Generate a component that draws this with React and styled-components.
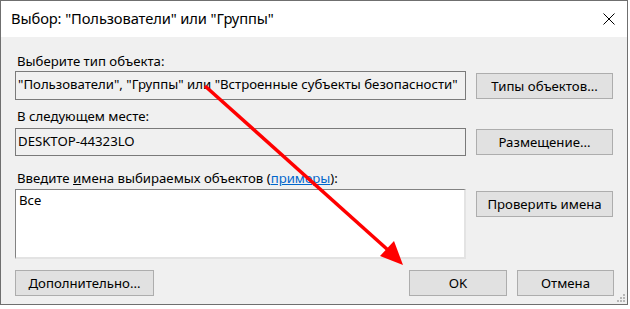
import styled, { createGlobalStyle } from 'styled-components';

const Global = createGlobalStyle`
  html, body {
    margin: 0;
    padding: 0;
    background: #ffffff;
  }
  body {
    font-family: "Noto Sans", "Liberation Sans", sans-serif;
    color: #000;
  }
`;

const Page = styled.div`
  position: relative;
  width: 630px;
  height: 309px;
  overflow: hidden;
`;

const Window = styled.div`
  width: 626px;
  height: 303px;
  border: 1px solid #6f6f6f;
  background: #f0f0f0;
  display: flex;
  flex-direction: column;
`;

const TitleBar = styled.div`
  height: 36px;
  background: #fff;
  display: flex;
  align-items: center;
  justify-content: space-between;
  padding: 0 10px 0 10px;
`;

const Title = styled.div`
  font-size: 14.7px;
  letter-spacing: -0.1px;
  margin-top: -2px;
`;

const Close = styled.button`
  width: 16px;
  height: 16px;
  border: 0;
  padding: 0;
  background: transparent;
  display: flex;
  align-items: center;
  justify-content: center;
  margin-top: -1px;
`;

const Body = styled.div`
  flex: 1;
  position: relative;
  padding: 16px 13px 6px 14px;
  display: flex;
  flex-direction: column;
`;

const Label = styled.div`
  height: 16px;
  line-height: 16px;
  font-size: 13.2px;
  margin-top: ${({ $mt }) => $mt || 0}px;
  margin-bottom: ${({ $mb }) => $mb || 3}px;
  padding-left: 2px;
  white-space: nowrap;

  u {
    text-decoration: underline;
  }
  a {
    color: #0066cc;
    text-decoration: underline;
  }
`;

const Row = styled.div`
  display: flex;
  gap: 10px;
  align-items: ${({ $top }) => ($top ? 'flex-start' : 'center')};
`;

const Field = styled.div`
  width: 451px;
  height: ${({ $h }) => $h}px;
  box-sizing: border-box;
  border: 1px solid #7a7a7a;
  background: #f0f0f0;
  font-size: 13.2px;
  padding: 4px 2px;
  white-space: nowrap;
  overflow: hidden;
  line-height: 17px;
`;

const TextArea = styled.div`
  width: 451px;
  height: 70px;
  box-sizing: border-box;
  background: #fff;
  border-style: solid;
  border-width: 1px 2px 2px 1px;
  border-color: #828282 #e3e3e3 #e3e3e3 #828282;
  font-size: 13.2px;
  line-height: 17px;
  padding: 2px 3px;
`;

const Button = styled.button`
  width: ${({ $w }) => $w || 137}px;
  height: 26px;
  box-sizing: border-box;
  background: #e1e1e1;
  border: 1px solid #adadad;
  font-family: inherit;
  font-size: 13.2px;
  color: #000;
  padding: 0;
  margin-top: ${({ $mt }) => $mt || 0}px;
  margin-left: ${({ $ml }) => $ml || 0}px;
`;

const Footer = styled.div`
  margin-top: 11px;
  display: flex;
  align-items: center;
`;

const Spacer = styled.div`
  flex: 1;
`;

const Grip = styled.svg`
  position: absolute;
  right: 1px;
  bottom: 1px;
`;

const Arrow = styled.svg`
  position: absolute;
  left: 0;
  top: 0;
  pointer-events: none;
`;

export default function App() {
  return (
    <Page>
      <Global />
      <Window>
        <TitleBar>
          <Title>Выбор: "Пользователи" или "Группы"</Title>
          <Close aria-label="Закрыть">
            <svg width="12" height="12" viewBox="0 0 12 12">
              <path d="M0.5 0.5 L11.5 11.5 M11.5 0.5 L0.5 11.5" stroke="#000" strokeWidth="1" />
            </svg>
          </Close>
        </TitleBar>
        <Body>
          <Label $mb={2}>Выберите тип объекта:</Label>
          <Row>
            <Field $h={29}>"Пользователи", "Группы" или "Встроенные субъекты безопасности"</Field>
            <Button>Типы объектов...</Button>
          </Row>

          <Label $mt={8} $mb={4}>В следующем месте:</Label>
          <Row>
            <Field $h={28}>DESKTOP-44323LO</Field>
            <Button>Размещение...</Button>
          </Row>

          <Label $mt={14} $mb={3}>
            Введите <u>и</u>мена выбираемых объектов (<a href="#">примеры</a>):
          </Label>
          <Row $top>
            <TextArea>Все</TextArea>
            <Button $mt={2}>Проверить имена</Button>
          </Row>

          <Footer>
            <Button $w={139}>Дополнительно...</Button>
            <Spacer />
            <Button $w={98}>OK</Button>
            <Button $w={97} $ml={10}>Отмена</Button>
          </Footer>

          <Grip width="10" height="10" viewBox="0 0 10 10">
            <g fill="#b8b8b8">
              <rect x="7" y="1" width="2" height="2" />
              <rect x="4" y="4" width="2" height="2" />
              <rect x="7" y="4" width="2" height="2" />
              <rect x="1" y="7" width="2" height="2" />
              <rect x="4" y="7" width="2" height="2" />
              <rect x="7" y="7" width="2" height="2" />
            </g>
          </Grip>
        </Body>
      </Window>
      <Arrow width="630" height="309" viewBox="0 0 630 309">
        <line x1="205" y1="86" x2="388" y2="250" stroke="#ff0000" strokeWidth="3.5" />
        <polygon points="403,265 380,256 394,241" fill="#ff0000" />
      </Arrow>
    </Page>
  );
}
